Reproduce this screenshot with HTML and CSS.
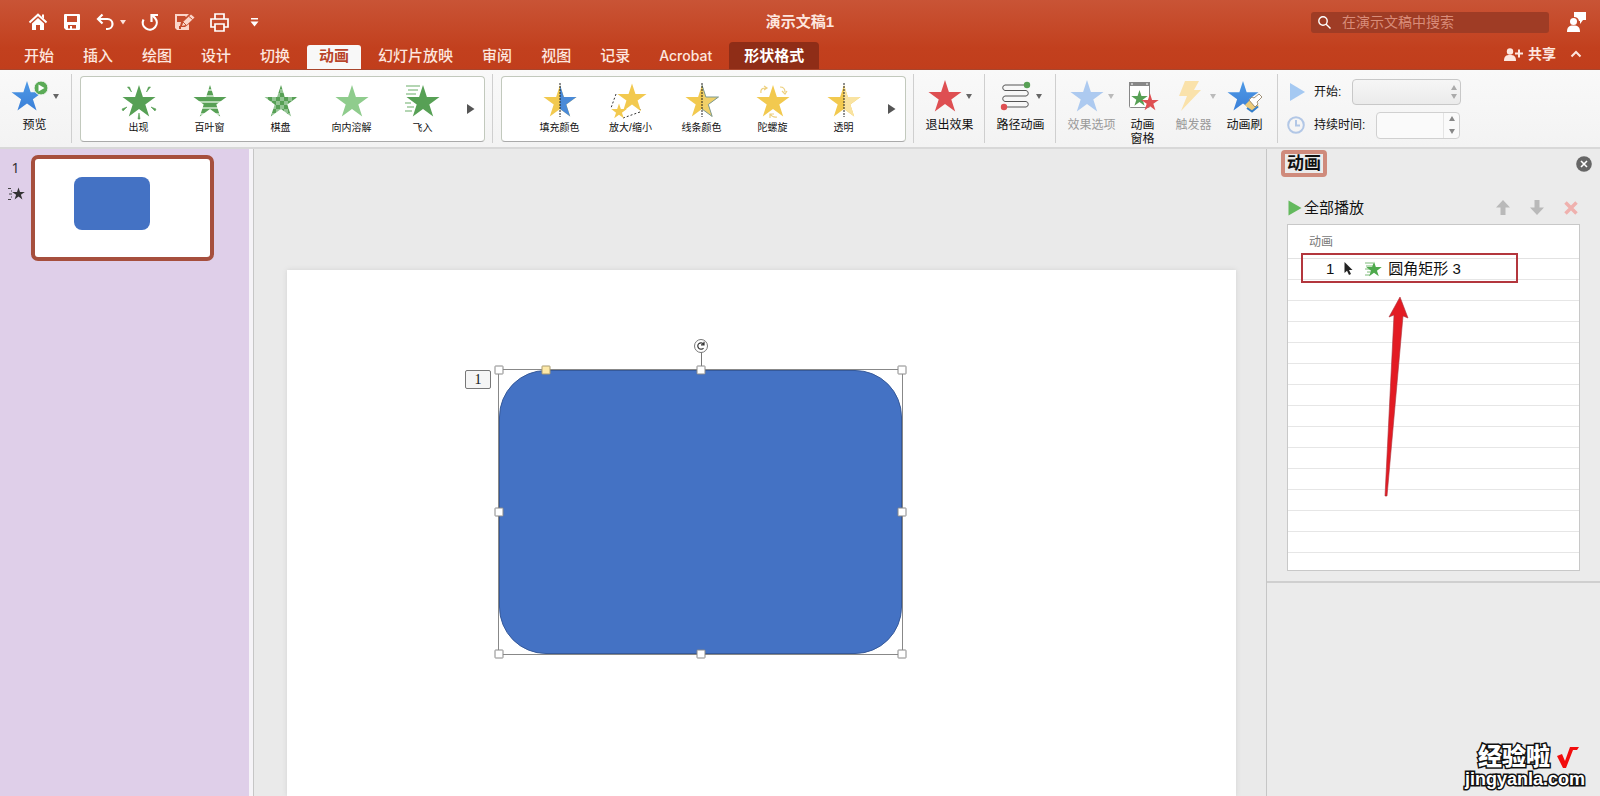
FILE: index.html
```html
<!DOCTYPE html>
<html lang="zh-CN">
<head>
<meta charset="utf-8">
<title>演示文稿1</title>
<link rel="stylesheet" href="styles.css">
</head>
<body>
<svg class="defs" aria-hidden="true">
  <defs>
    <linearGradient id="blue" x1="0" y1="0" x2="0" y2="1"><stop offset="0" stop-color="#4f9ae6"/><stop offset="1" stop-color="#3a7fd8"/></linearGradient>
    <pattern id="checks" width="8" height="8" patternUnits="userSpaceOnUse"><rect width="8" height="8" fill="#93c493"/><rect width="4" height="4" fill="#57a055"/><rect x="4" y="4" width="4" height="4" fill="#57a055"/></pattern>
    <pattern id="blinds" width="34" height="6" patternUnits="userSpaceOnUse"><rect width="34" height="4" fill="#57a055"/><rect y="4" width="34" height="2" fill="#b5d9b4"/></pattern>
    <symbol id="star" viewBox="0 0 34 32"><path d="M17 0 20.9 12H33.5L23.3 19.5 27.2 31.5 17 24 6.8 31.5 10.7 19.5.5 12H13.1Z"/></symbol>
    <symbol id="half-star" viewBox="0 0 34 32"><path d="M17 0 20.900 12H33.500L23.300 19.500 27.200 31.500 17 24"/></symbol>
  </defs>
</svg>
<div class="app">
  <header class="header">
    <div class="titlebar">
      <div class="quick">
        <button aria-label="主页"><svg width="20" height="20" viewBox="0 0 20 20"><path d="M1.500 10.500 10 2.700l8.500 7.800" fill="none" stroke="#fff" stroke-width="2"/><path d="M14 2.500h2V7l-2-2z" fill="#fff"/><path d="M4 11.500 10 6l6 5.500V18h-4v-5H8v5H4z" fill="#fff"/></svg></button>
        <button aria-label="保存"><svg width="18" height="18" viewBox="0 0 18 18"><path fill="#fff" fill-rule="evenodd" d="M1 2q0-1 1-1h14q1 0 1 1v14q0 1-1 1H3l-2-2zM4 3v6h10V3zM5 12v3.500h2V13h2v2.500h4V12z"/></svg></button>
        <button class="undo" aria-label="撤消"><svg width="18" height="18" viewBox="0 0 18 18"><path d="M6.500 1.500 2 6l4.500 4.500M2 6h9.500a5 5 0 0 1 0 10H10" fill="none" stroke="#fff" stroke-width="2.200"/></svg><svg width="6" height="5" viewBox="0 0 6 5"><path d="M0 0h6L3 4.500z" fill="#fbe3dc"/></svg></button>
        <button aria-label="重做"><svg width="18" height="18" viewBox="0 0 18 18"><path d="M2.500 6.500A7 7 0 1 0 14 5l-3-3" fill="none" stroke="#fff" stroke-width="2.200"/><path d="M10.500 9V2H17" fill="none" stroke="#fff" stroke-width="2.200"/></svg></button>
        <button aria-label="编辑"><svg width="21" height="18" viewBox="0 0 21 18"><path fill="#fbd5c9" fill-rule="evenodd" d="M1 1h14l-3 3-1-1H3v6h4l-1 4H5v3h2v-2h4l4-3v6H3l-2-2z"/><path d="m8 13 1.500-4.500L17 1.500l3.500 3-7.500 7.300z" fill="#fbd5c9"/><path d="m15 3.500 3.500 3M9 9l3 3" stroke="#c5502f"/></svg></button>
        <button aria-label="打印"><svg width="19" height="19" viewBox="0 0 19 19" fill="none" stroke="#fff" stroke-width="1.700"><path d="M5 6V1h9v5M5 14H1V6h17v8h-4"/><path d="M5 11h9v7H5z"/></svg></button>
        <button aria-label="自定义工具栏"><svg width="9" height="9" viewBox="0 0 9 9" fill="#fff"><path d="M1 0h7v1.500H1zM.5 3.500h8l-4 5z"/></svg></button>
      </div>
      <h1 class="title">演示文稿1</h1>
      <div class="tools">
        <label class="search"><svg width="13" height="13" viewBox="0 0 13 13" fill="none" stroke="#fff" stroke-width="1.400"><circle cx="5" cy="5" r="4.200"/><path d="m8.200 8.200 4.300 4.300"/></svg><input type="search" placeholder="在演示文稿中搜索" aria-label="在演示文稿中搜索"></label>
        <button aria-label="反馈"><svg width="19" height="20" viewBox="0 0 19 20" fill="#fff"><circle cx="6.500" cy="9.500" r="3.500"/><path d="M0 20c0-5 2-6.500 6.500-6.500S13 15 13 20z"/><path d="M7 0h12v8h-3l-3 4V9h-1A5 5 0 0 0 7 5z"/></svg></button>
      </div>
    </div>
    <nav class="tabs">
      <button>开始</button><button>插入</button><button>绘图</button><button>设计</button><button>切换</button><button class="active">动画</button><button>幻灯片放映</button><button>审阅</button><button>视图</button><button>记录</button><button class="latin">Acrobat</button><button class="context">形状格式</button>
      <div class="share">
        <button><svg width="19" height="13" viewBox="0 0 19 13" fill="#fde6df"><circle cx="6" cy="3.500" r="3.200"/><path d="M0 13c0-5 2-6 6-6s6 1 6 6zM14 1.500h2v3h3v2h-3v3h-2v-3h-3v-2h3z"/></svg>共享</button>
        <button aria-label="折叠功能区"><svg width="12" height="8" viewBox="0 0 12 8"><path d="m1.500 6.500 4.500-4.500 4.500 4.500" fill="none" stroke="#fde6df" stroke-width="2"/></svg></button>
      </div>
    </nav>
  </header>

  <section class="ribbon" aria-label="动画">
    <div class="group preview">
      <button class="cmd"><span class="icon-row"><svg width="38" height="32" viewBox="0 0 38 32"><use href="#star" y="1" width="32" height="30" fill="url(#blue)"/><circle cx="30" cy="8" r="7" fill="#5bab57" stroke="#f6f6f6"/><path d="m27.500 4.500 6 3.500-6 3.500z" fill="#fff"/></svg><i class="caret"></i></span>预览</button>
    </div>
    <div class="group gal">
      <div class="gallery">
        <button><svg width="44" height="36" viewBox="0 0 44 36"><use href="#star" x="5" y="2" width="34" height="32" fill="#57a055"/><path d="m10.500 4 2 0 2 5zM33.500 4l-2 0-2 5zM5 26l5-2-4 4zM39 26l-5-2 4 4zM21 36l1-6 1 6z" fill="#57a055" stroke="#57a055" stroke-width=".6"/></svg>出现</button>
        <button><svg width="44" height="36" viewBox="0 0 44 36"><use href="#star" x="5" y="2" width="34" height="32" fill="url(#blinds)"/></svg>百叶窗</button>
        <button><svg width="44" height="36" viewBox="0 0 44 36"><use href="#star" x="5" y="2" width="34" height="32" fill="url(#checks)"/></svg>棋盘</button>
        <button><svg width="44" height="36" viewBox="0 0 44 36"><use href="#star" x="5" y="2" width="34" height="32" fill="#8fcc8d"/></svg>向内溶解</button>
        <button><svg width="44" height="36" viewBox="0 0 44 36"><path d="M5 3h14M7 7h10M5 11h10M4 20h6M6 24h7M4 28h7" stroke="#9cc99b" stroke-width="1.300"/><use href="#star" x="5" y="2" width="34" height="32" fill="#57a055"/></svg>飞入</button>
        <button class="more" aria-label="更多"><svg width="8" height="10" viewBox="0 0 8 10"><path d="m0 0 7.500 5L0 10z" fill="#555"/></svg></button>
      </div>
    </div>
    <div class="group gal">
      <div class="gallery">
        <button><svg width="44" height="36" viewBox="0 0 44 36"><use href="#star" x="5" y="2" width="34" height="32" fill="#f2c94f"/><use href="#half-star" x="5" y="2" width="34" height="32" fill="#4a8ad8"/><path d="M22 0v34" stroke="#222" stroke-dasharray="2 1"/></svg>填充颜色</button>
        <button><svg width="44" height="36" viewBox="0 0 44 36"><path d="M7 11 2 25M14 35l17-6v-3" fill="none" stroke="#333" stroke-dasharray="2 2"/><use href="#star" x="8" y="0" width="30" height="29" fill="#f2c94f"/><use href="#star" x="2" y="20" width="16" height="16" fill="#f2c94f"/></svg>放大/缩小</button>
        <button><svg width="44" height="36" viewBox="0 0 44 36"><use href="#star" x="5" y="2" width="34" height="32" fill="#f2c94f"/><use href="#half-star" x="5" y="2" width="34" height="32" fill="#f0d068" stroke="#7d9a94"/><path d="M22 0v34" stroke="#222" stroke-dasharray="2 1"/></svg>线条颜色</button>
        <button><svg width="44" height="36" viewBox="0 0 44 36"><use href="#star" x="5" y="2" width="34" height="32" fill="#f2c94f"/><path d="M10 10q-1-5 5-5m-2-2 3 2-3 2M29 4q5 0 5 5m-3-1 3 3 2-3M26 34q-4 1-7-3m0 4v-4h4" fill="none" stroke="#edcf7c" stroke-width="1.200"/></svg>陀螺旋</button>
        <button><svg width="44" height="36" viewBox="0 0 44 36"><use href="#star" x="5" y="2" width="34" height="32" fill="#f2c94f"/><use href="#half-star" x="5" y="2" width="34" height="32" fill="#f9e3a1"/><path d="M22 0v34" stroke="#222" stroke-dasharray="2 1"/></svg>透明</button>
        <button class="more" aria-label="更多"><svg width="8" height="10" viewBox="0 0 8 10"><path d="m0 0 7.500 5L0 10z" fill="#555"/></svg></button>
      </div>
    </div>
    <div class="group single">
      <button class="cmd"><span class="icon-row"><svg width="34" height="32" viewBox="0 0 34 32"><use href="#star" width="34" height="32" fill="#de4f52"/></svg><i class="caret"></i></span>退出效果</button>
    </div>
    <div class="group single">
      <button class="cmd"><span class="icon-row"><svg width="32" height="32" viewBox="0 0 32 32"><path d="M27 5H5a2.800 2.800 0 0 0 0 5.500h21a2.800 2.800 0 0 1 0 5.500H5a2.800 2.800 0 0 0 0 5.500h21a2.800 2.800 0 0 1 0 5.500H4" fill="none" stroke="#555"/><circle cx="27" cy="5" r="3.200" fill="#57a055"/><circle cx="4" cy="27" r="3.200" fill="#de4f52"/></svg><i class="caret"></i></span>路径动画</button>
    </div>
    <div class="group advanced">
      <button class="cmd" disabled><span class="icon-row"><svg width="34" height="32" viewBox="0 0 34 32"><use href="#star" width="34" height="32" fill="#adcaf0"/></svg><i class="caret"></i></span>效果选项</button>
      <button class="cmd"><span class="icon-row"><svg width="32" height="32" viewBox="0 0 32 32"><rect x="2.500" y="2.500" width="20" height="25" rx="1" fill="#fff" stroke="#888"/><path d="M2 2h21v4H2z" fill="#888"/><path d="M4 4h2M19 4h2" stroke="#fff"/><use href="#star" x="4" y="10" width="17" height="16" fill="#57a055"/><use href="#star" x="14" y="13" width="18" height="18" fill="#de4f52"/></svg></span>动画<br>窗格</button>
      <button class="cmd" disabled><span class="icon-row"><svg width="34" height="32" viewBox="0 0 34 32"><path d="M13 1h14l-5 9h7L9 31l6-15H7z" fill="#fae2ab"/></svg><i class="caret"></i></span>触发器</button>
      <button class="cmd"><span class="icon-row"><svg width="36" height="32" viewBox="0 0 36 32"><use href="#star" x="0" y="1" width="32" height="30" fill="url(#blue)"/><path d="m18 25 6-6 8 7-7 6q-4-3-7-7z" fill="#eccb7b"/><path d="m20 28 5 3.500 6-5" fill="none" stroke="#347ecb" stroke-width="2"/><path d="m22 20 3-3 2 1 5-4 3 3-5 5 1 2-3 3z" fill="#fff" stroke="#8a7658" stroke-width=".8"/></svg></span>动画刷</button>
    </div>
    <div class="group timing">
      <div class="field"><svg width="18" height="20" viewBox="0 0 18 20"><path d="m3 1 15 9L3 19z" fill="#a5c9f2"/></svg><label for="start">开始:</label>
        <span class="select"><select id="start" disabled><option></option></select><svg width="6" height="14" viewBox="0 0 6 14" fill="#aaa"><path d="M0 5h6L3 0zM0 9h6l-3 5z"/></svg></span></div>
      <div class="field"><svg width="18" height="18" viewBox="0 0 18 18" fill="none" stroke="#b2c7e6" stroke-width="2"><circle cx="9" cy="9" r="7.800"/><path d="M9 4v5.500h4"/></svg><label for="duration">持续时间:</label>
        <span class="spin"><input id="duration" type="text"><span class="steps"><button aria-label="增加"><svg width="6" height="5" viewBox="0 0 6 5"><path d="M0 5h6L3 0z" fill="#888"/></svg></button><button aria-label="减少"><svg width="6" height="5" viewBox="0 0 6 5"><path d="M0 0h6L3 5z" fill="#888"/></svg></button></span></span></div>
    </div>
  </section>

  <main class="main">
    <aside class="slides">
      <div class="slide-meta"><span>1</span><svg width="18" height="14" viewBox="0 0 18 14"><path d="M1 1.500h3M2 7h3M1 12.500h3M4 4h1M4 10h1" stroke="#444"/><use href="#star" x="5" y="0" width="13" height="13" fill="#333"/></svg></div>
      <button class="thumb" aria-label="幻灯片 1"><span class="thumb-shape"></span></button>
    </aside>
    <section class="canvas">
      <div class="slide">
        <span class="order">1</span>
        <div class="shape">
          <div class="fill"></div>
          <i class="stem"></i>
          <svg class="rotate" width="14" height="14" viewBox="0 0 14 14"><circle cx="7" cy="7" r="6.500" fill="#fff" stroke="#777"/><path d="M9.500 9a3.200 3.200 0 1 1 0-4M10 2.800v3H7" fill="none" stroke="#333" stroke-width="1.200"/></svg>
          <i class="h nw"></i><i class="h n"></i><i class="h ne"></i><i class="h w"></i><i class="h e"></i><i class="h sw"></i><i class="h s"></i><i class="h se"></i><i class="h adjust"></i>
        </div>
      </div>
    </section>
    <aside class="pane">
      <div class="pane-body">
        <div class="pane-head"><h2>动画</h2><button aria-label="关闭"><svg width="16" height="16" viewBox="0 0 16 16"><circle cx="8" cy="8" r="7.800" fill="#666"/><path d="m5 5 6 6m0-6-6 6" stroke="#fff" stroke-width="1.600"/></svg></button></div>
        <div class="pane-tools">
          <button class="play"><svg width="14" height="16" viewBox="0 0 14 16"><path d="m.5.5 13 7.500-13 7.500z" fill="#63b95d"/></svg>全部播放</button>
          <button aria-label="上移" disabled><svg width="14" height="15" viewBox="0 0 14 15"><path d="m7 0 7 7.500h-4.500V15h-5V7.500H0z" fill="#b9b9b9"/></svg></button>
          <button aria-label="下移" disabled><svg width="14" height="15" viewBox="0 0 14 15"><path d="m7 15 7-7.500h-4.500V0h-5v7.500H0z" fill="#b9b9b9"/></svg></button>
          <button aria-label="删除" disabled><svg width="14" height="14" viewBox="0 0 14 14"><path d="m1.500 1.500 11 11m0-11-11 11" stroke="#efb1ae" stroke-width="3.500"/></svg></button>
        </div>
        <div class="list">
          <h3>动画</h3>
          <ol>
            <li><span>1</span><svg width="9" height="14" viewBox="0 0 9 14"><path d="M.5 0v11l2.500-2.300L5 13l2-1-2-4h3.500z" fill="#222"/></svg><svg class="fly" width="17" height="16" viewBox="0 0 17 16"><path d="M0 2h8M1 5h7M0 8h5M2 11h4M0 14h5" stroke="#7cba79"/><use href="#star" x="1" y="0" width="16" height="16" fill="#4ea94c"/></svg><span>圆角矩形 3</span><i class="mark"></i></li>
          </ol>
          <svg class="arrow" width="20" height="200" viewBox="0 0 20 200"><path d="m15 0 8 21-5-2L2 199H0L9 18l-5 2z" fill="#e31b23" stroke="#a8323a" stroke-width=".6"/></svg>
        </div>
      </div>
      <div class="pane-rest">
        <div class="brand"><div class="brand-top"><span>经验啦</span><svg width="24" height="24" viewBox="0 0 24 24"><path d="m1 11 5-2 3 7L14 2h9l-2 3h-4L10 23H7z" fill="#f20d0d"/></svg></div><div class="brand-url">jingyanla.com</div></div>
      </div>
    </aside>
  </main>
</div>
</body>
</html>
```

FILE: styles.css
```css
* { box-sizing: border-box; }
body {
  margin: 0;
  font-family: "Liberation Sans", "Noto Sans CJK SC", sans-serif;
  font-size: 12px;
  line-height: 14px;
  color: #111;
}
h1, h2, h3, ol { margin: 0; padding: 0; }
button, input, select { font: inherit; color: inherit; }
button { border: 0; padding: 0; background: none; display: flex; align-items: center; }
svg { display: block; flex: none; overflow: visible; }
.defs { position: absolute; width: 0; height: 0; }
.app { height: 100vh; display: flex; flex-direction: column; overflow: hidden; }

/* Title bar and tabs */
.header { background: linear-gradient(#c95436, #c2401e 70%, #c13e1c); color: #fde6df; border-bottom: 1px solid #a8452c; }
.titlebar { display: grid; grid-template-columns: 1fr auto 1fr; align-items: center; height: 42px; padding: 2px 14px 0; }
.quick { display: flex; align-items: center; gap: 15px; padding-left: 14px; }
.quick .undo { gap: 6px; }
.quick button:last-child { margin-left: 6px; }
.title { font-size: 15px; line-height: 20px; }
.tools { display: flex; justify-content: flex-end; align-items: center; gap: 18px; }
.search { display: flex; align-items: center; gap: 11px; width: 238px; height: 21px; padding: 0 7px; border-radius: 3px; background: #9f3c25; }
.search input { flex: 1; min-width: 0; border: 0; padding: 0; background: none; outline: 0; font-size: 14px; line-height: 20px; }
.search input::placeholder { color: #d98c79; opacity: 1; }
.tabs { display: flex; gap: 5px; height: 27px; padding-left: 12px; }
.tabs > button { padding: 0 12px; font-size: 15px; line-height: 22px; font-weight: 500; white-space: nowrap; }
.tabs .latin { font-family: Inter, sans-serif; font-size: 14px; }
.tabs .active { margin-top: 3px; padding-bottom: 3px; border-radius: 3px 3px 0 0; background: #f8f8f8; color: #b8442a; font-weight: 700; }
.tabs .context { padding: 0 15px; border-radius: 4px 4px 0 0; background: #8f2d17; color: #fff; font-weight: 700; }
.share { display: flex; gap: 14px; margin-left: auto; padding: 0 18px 3px 0; }
.share button { gap: 5px; font-size: 14px; font-weight: 700; }

/* Ribbon */
.ribbon { display: flex; height: 79px; background: linear-gradient(#f9f9f9, #f3f3f3); border-bottom: 2px solid #d8d8d8; }
.group { position: relative; display: flex; flex: none; }
.group:not(.timing)::after { content: ""; position: absolute; right: 0; top: 4px; bottom: 4px; width: 1px; background: #cfcfcf; }
.preview { width: 72px; padding-left: 9px; }
.cmd { flex-direction: column; justify-content: flex-start; width: 51px; padding-top: 10px; white-space: nowrap; text-align: center; }
.cmd:disabled { color: #9a9a9a; }
.icon-row { display: flex; align-items: center; gap: 4px; margin-bottom: 6px; }
.caret { border: 3px solid transparent; border-top: 5px solid #666; border-bottom: 0; }
.cmd:disabled .caret { border-top-color: #bbb; }
.gal { padding: 6px 8px 5px; }
.gallery { display: flex; width: 405px; padding-left: 22px; border: 1px solid #c2c9bd; border-bottom-color: #aaa; border-radius: 4px; background: #fff; }
.gallery button { flex-direction: column; width: 71px; padding-top: 6px; gap: 2px; font-size: 10px; white-space: nowrap; }
.gallery .more { flex: 1; width: auto; justify-content: center; padding: 0; }
.single { width: 71px; justify-content: center; }
.advanced { padding: 0 8px 0 10px; }
.timing { flex-direction: column; gap: 7px; padding: 9px 0 0 9px; }
.field { display: flex; align-items: center; height: 26px; }
.field label { margin: 0 11px 0 9px; white-space: nowrap; }
.select { position: relative; width: 109px; height: 26px; }
.select select { appearance: none; width: 100%; height: 100%; border: 1px solid #c8c8c8; border-radius: 4px; background: linear-gradient(#f6f6f6, #ebebeb); opacity: 1; }
.select svg { position: absolute; right: 4px; top: 6px; }
.spin { display: flex; width: 84px; height: 27px; border: 1px solid #d0d0d0; border-radius: 4px; background: #fafafa; }
.spin input { flex: 1; min-width: 0; border: 0; border-right: 1px solid #e4e4e4; background: none; }
.steps { display: flex; flex-direction: column; width: 15px; }
.steps button { flex: 1; justify-content: center; }

/* Workspace */
.main { flex: 1; min-height: 0; display: flex; }
.slides { display: flex; align-items: flex-start; flex: none; width: 254px; padding-top: 6px; background: linear-gradient(90deg, #dfcfe9 249px, #f6f4f8 249px 253px, #c6c6c6 253px); }
.slide-meta { display: flex; flex-direction: column; align-items: center; gap: 11px; width: 31px; padding-top: 5px; font: 14px/16px "Noto Sans", sans-serif; color: #333; }
.thumb { align-items: flex-start; width: 183px; height: 106px; padding: 18px 0 0 39px; border: 4px solid #a64f3d; border-radius: 7px; background: #fff; }
.thumb-shape { width: 76px; height: 53px; border-radius: 8px; background: #4472c4; }
.canvas { flex: 1; min-width: 0; display: flex; padding: 121px 30px 0 33px; background: #eaeaea; }
.slide { position: relative; flex: 1; background: #fff; box-shadow: 0 0 5px #d2d2d2; }
.order { position: absolute; left: 178px; top: 100px; width: 26px; height: 19px; border: 1px solid #777; border-radius: 2px; background: #f5f5f5; font: 14px/17px "Liberation Serif", serif; text-align: center; }
.shape { position: absolute; left: 211px; top: 99px; width: 405px; height: 286px; border: 1px solid #888; }
.fill { height: 100%; border: 1px solid #35599a; border-radius: 47px; background: #4472c4; }
.stem { position: absolute; left: 50%; top: -18px; height: 18px; border-left: 1px solid #777; }
.rotate { position: absolute; left: calc(50% - 7px); top: -31px; }
.h { position: absolute; width: 9px; height: 9px; border: 1px solid #888; border-radius: 1px; background: #fff; transform: translate(-50%, -50%); }
.nw { left: 0; top: 0; } .n { left: 50%; top: 0; } .ne { left: 100%; top: 0; }
.w { left: 0; top: 50%; } .e { left: 100%; top: 50%; }
.sw { left: 0; top: 100%; } .s { left: 50%; top: 100%; } .se { left: 100%; top: 100%; }
.adjust { left: 47px; top: 0; background: #fde9a8; border-color: #a99b70; }

/* Animation pane */
.pane { display: flex; flex-direction: column; flex: none; width: 334px; border-left: 1px solid #c6c6c6; background: #ebebeb; }
.pane-body { padding: 1px 20px 10px; border-bottom: 2px solid #cfcfcf; }
.pane-head { display: flex; justify-content: space-between; align-items: center; margin: 0 -12px 0 -6px; }
.pane-head h2 { padding: 0 2px; border: 4px solid #cf8b7c; border-radius: 4px; font-size: 17px; line-height: 19px; }
.pane-tools { display: flex; align-items: center; gap: 20px; height: 29px; margin: 18px 0 0; padding: 0 2px 4px 1px; font-size: 15px; line-height: 20px; }
.pane-tools .play { gap: 2px; margin-right: auto; }
.list { position: relative; height: 347px; border: 1px solid #c8c8c8; background: repeating-linear-gradient(#fff 0 20px, #e6e6e6 20px 21px) 0 34px no-repeat #fff; }
.list h3 { height: 34px; padding: 10px 21px 0; border-bottom: 1px solid #e2e2e2; font-size: 12px; font-weight: 400; color: #777; }
.list ol { list-style: none; }
.list li { position: relative; display: flex; align-items: center; height: 20px; padding-left: 38px; font-size: 15px; line-height: 20px; }
.list li svg { margin-left: 10px; }
.list li .fly { margin: 0 6px 0 12px; }
.mark { position: absolute; left: 13px; top: -6px; width: 217px; height: 30px; border: 2px solid #b3363d; }
.arrow { position: absolute; left: 97px; top: 72px; }
.pane-rest { flex: 1; display: flex; align-items: flex-end; justify-content: flex-end; padding: 0 15px 7px; }
.brand { display: flex; flex-direction: column; align-items: flex-end; color: #fff; font-weight: 900; -webkit-text-stroke: 3px #111; paint-order: stroke fill; }
.brand-top { display: flex; align-items: center; gap: 6px; padding-right: 5px; font-size: 24px; line-height: 24px; }
.brand-url { font-size: 18px; line-height: 20px; }
```
